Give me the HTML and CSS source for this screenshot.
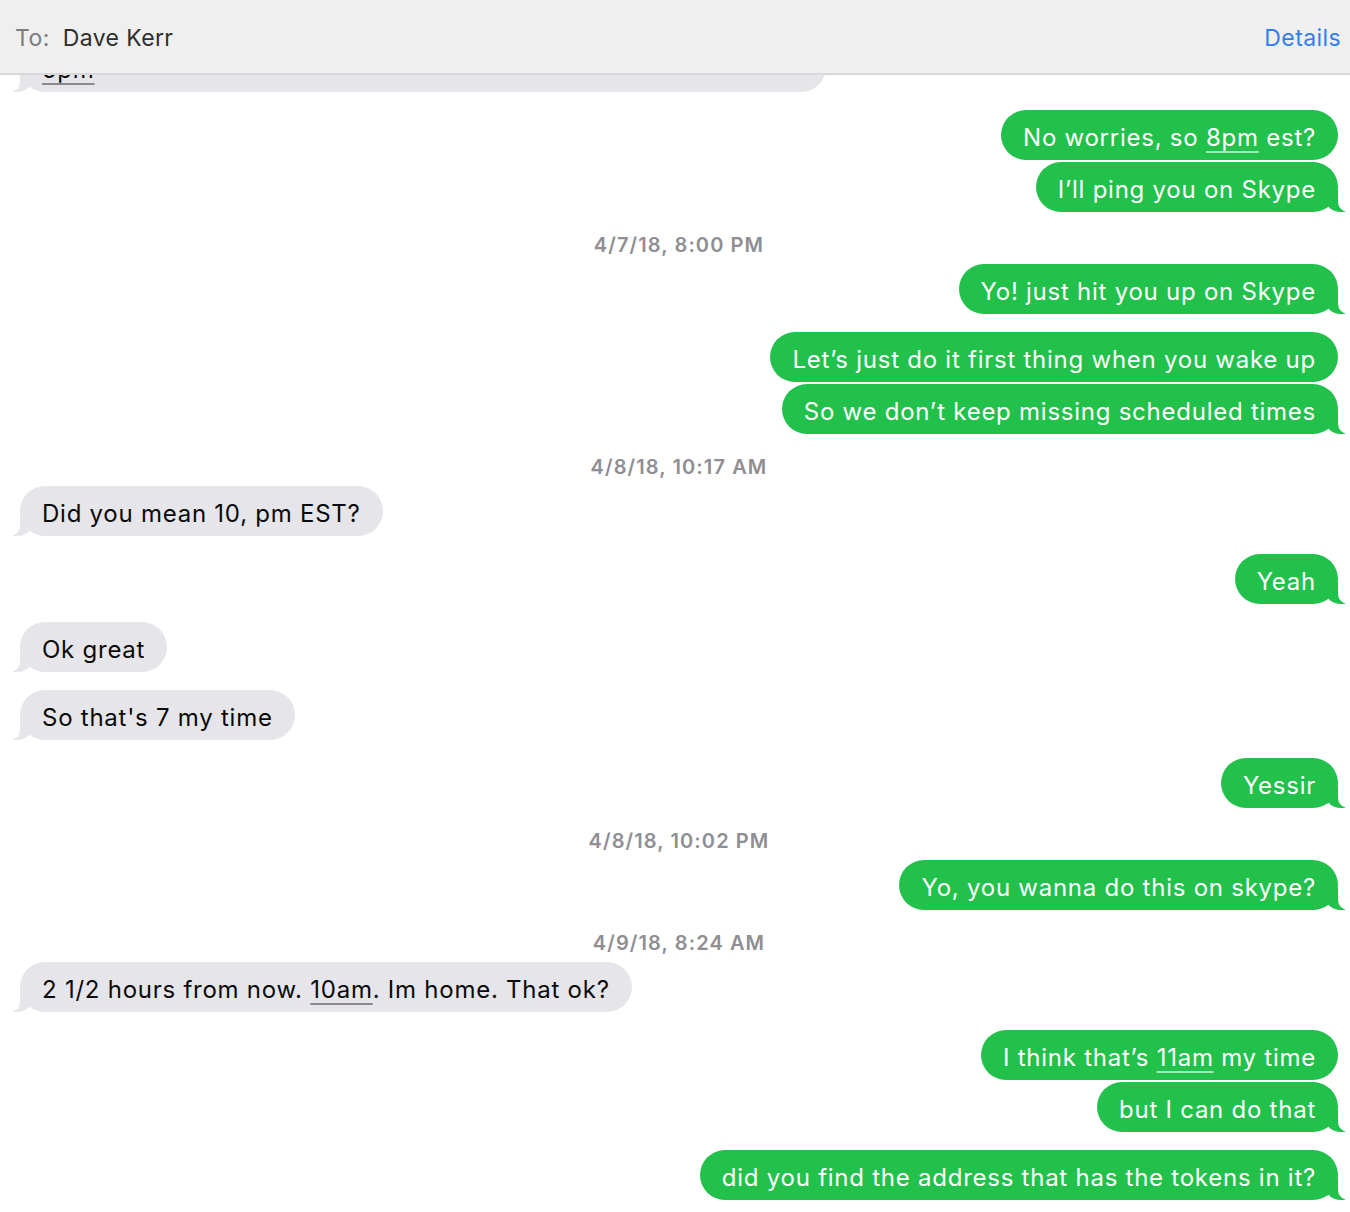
FILE: index.html
```html
<!DOCTYPE html>
<html lang="en">
<head>
<meta charset="utf-8">
<title>Dave Kerr</title>
<link rel="stylesheet" href="styles.css">
</head>
<body>
<header class="topbar">
  <div class="to"><span class="to-label">To:</span><span class="to-name">Dave Kerr</span></div>
  <a class="details">Details</a>
</header>
<main class="thread">
  <div class="row in cut-row"><div class="bubble tail cut"><u>5pm</u></div></div>

  <div class="row out gap"><div class="bubble">No worries, so <u>8pm</u> est?</div></div>
  <div class="row out grp"><div class="bubble tail">I’ll ping you on Skype</div></div>

  <div class="stamp">4/7/18, 8:00 PM</div>
  <div class="row out"><div class="bubble tail">Yo! just hit you up on Skype</div></div>
  <div class="row out gap"><div class="bubble">Let’s just do it first thing when you wake up</div></div>
  <div class="row out grp"><div class="bubble tail">So we don’t keep missing scheduled times</div></div>

  <div class="stamp">4/8/18, 10:17 AM</div>
  <div class="row in"><div class="bubble tail">Did you mean 10, pm EST?</div></div>
  <div class="row out gap"><div class="bubble tail">Yeah</div></div>
  <div class="row in gap"><div class="bubble tail">Ok great</div></div>
  <div class="row in gap"><div class="bubble tail">So that's 7 my time</div></div>
  <div class="row out gap"><div class="bubble tail">Yessir</div></div>

  <div class="stamp">4/8/18, 10:02 PM</div>
  <div class="row out"><div class="bubble tail">Yo, you wanna do this on skype?</div></div>

  <div class="stamp">4/9/18, 8:24 AM</div>
  <div class="row in"><div class="bubble tail">2 1/2 hours from now. <u>10am</u>. Im home. That ok?</div></div>
  <div class="row out gap"><div class="bubble">I think that’s <u>11am</u> my time</div></div>
  <div class="row out grp"><div class="bubble tail">but I can do that</div></div>
  <div class="row out gap"><div class="bubble tail">did you find the address that has the tokens in it?</div></div>
</main>
</body>
</html>
```

FILE: styles.css
```css
html, body {
  margin: 0;
  padding: 0;
  background: #ffffff;
}

body {
  width: 1350px;
  height: 1212px;
  overflow: hidden;
  font-family: "Inter", "Roboto", "Noto Sans", sans-serif;
}

.topbar {
  position: relative;
  z-index: 5;
  box-sizing: border-box;
  height: 75px;
  background: #efefef;
  border-bottom: 2px solid #d8d8d8;
  display: flex;
  align-items: center;
  justify-content: space-between;
  padding: 3px 9px 0 15px;
  font-size: 23px;
  letter-spacing: 0.4px;
}

.to-label {
  color: #7d7d7d;
  margin-right: 13px;
}

.to-name {
  color: #2e2e2e;
}

.details {
  color: #2f80ee;
}

.thread {
  display: flex;
  flex-direction: column;
  padding: 0 12px 0 20px;
}

.row {
  display: flex;
}

.row.in {
  justify-content: flex-start;
}

.row.out {
  justify-content: flex-end;
}

.row.gap {
  margin-top: 18px;
}

.row.grp {
  margin-top: 2px;
}

.cut-row {
  margin-top: -33px;
}

.bubble {
  position: relative;
  box-sizing: border-box;
  height: 50px;
  font-size: 24px;
  line-height: 30px;
  letter-spacing: 0.75px;
  padding: 13px 22px 7px 22px;
  border-radius: 25px;
  white-space: nowrap;
}

.bubble.cut {
  width: 806px;
}

.out .bubble {
  background: #22c14b;
  color: #ffffff;
}

.in .bubble {
  background: #e5e5ea;
  color: #0a0a0a;
}

.bubble u {
  text-decoration: underline;
  text-decoration-thickness: 1.5px;
  text-underline-offset: 5px;
}

.out .bubble u {
  text-decoration-color: rgba(255, 255, 255, 0.6);
}

.in .bubble u {
  text-decoration-color: #8a8a8e;
}

.out .bubble.tail::before {
  content: "";
  position: absolute;
  bottom: 0;
  right: -7px;
  width: 20px;
  height: 22px;
  background: #22c14b;
  border-bottom-left-radius: 16px 14px;
}

.out .bubble.tail::after {
  content: "";
  position: absolute;
  bottom: 0;
  right: -10px;
  width: 10px;
  height: 22px;
  background: #ffffff;
  border-bottom-left-radius: 10px;
}

.in .bubble.tail::before {
  content: "";
  position: absolute;
  bottom: 0;
  left: -7px;
  width: 20px;
  height: 22px;
  background: #e5e5ea;
  border-bottom-right-radius: 16px 14px;
}

.in .bubble.tail::after {
  content: "";
  position: absolute;
  bottom: 0;
  left: -10px;
  width: 10px;
  height: 22px;
  background: #ffffff;
  border-bottom-right-radius: 10px;
}

.stamp {
  text-align: center;
  color: #8e8e93;
  font-size: 20px;
  font-weight: 600;
  line-height: 20px;
  padding: 23px 0 9px 0;
  letter-spacing: 1.1px;
}
```
